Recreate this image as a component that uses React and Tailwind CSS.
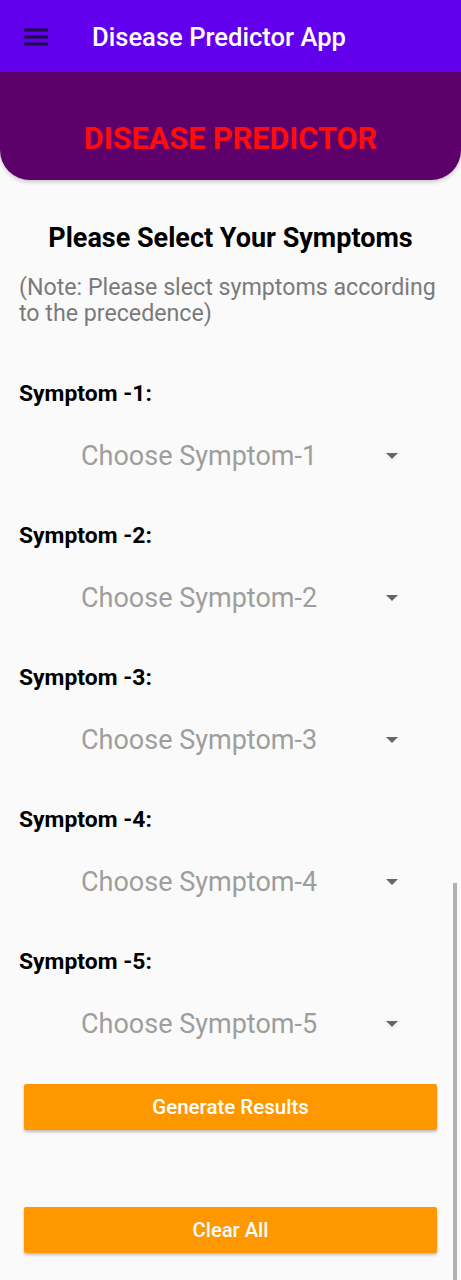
import React from "react";

function Dropdown({ n }) {
  return (
    <div className="mt-[24px] h-[48px] flex items-center">
      <span className="ml-[81px] text-[27px] leading-none text-[#9e9e9e]">Choose Symptom-{n}</span>
      <svg className="ml-auto mr-[63px]" width="12" height="6" viewBox="0 0 12 6">
        <path d="M0 0 L12 0 L6 6 Z" fill="#666666" />
      </svg>
    </div>
  );
}

export default function App() {
  const font = { fontFamily: "Roboto, 'Noto Sans', sans-serif" };
  return (
    <div className="relative w-[461px] h-[1280px] bg-[#fafafa] overflow-hidden" style={font}>
      <header className="h-[72px] bg-[#6200ee] flex items-center pl-[24px]">
        <svg width="24" height="18" viewBox="0 0 24 18" className="mt-[2px]">
          <rect x="0" y="0.5" width="24" height="3" fill="#1c0b45" />
          <rect x="0" y="7.5" width="24" height="3" fill="#1c0b45" />
          <rect x="0" y="14.5" width="24" height="3" fill="#1c0b45" />
        </svg>
        <h1 className="ml-[44px] mt-[4px] text-[25.6px] font-medium text-white leading-none">Disease Predictor App</h1>
      </header>
      <div className="h-[108px] bg-[#5e006b] rounded-b-[30px] flex items-center justify-center shadow-[0_2px_4px_rgba(0,0,0,0.2)]">
        <span className="text-[30.6px] font-bold text-[#ff0d0d] leading-none mt-[26px]">DISEASE PREDICTOR</span>
      </div>
      <h2 className="mt-[42px] text-center text-[27px] leading-[32px] font-bold text-black">Please Select Your Symptoms</h2>
      <p className="mt-[20px] px-[19px] text-[23.2px] leading-[26px] text-[#7a7a7a]">
        (Note: Please slect symptoms according to the precedence)
      </p>
      <div className="mt-[54px]">
        {[1, 2, 3, 4, 5].map((n) => (
          <div key={n} className={n === 1 ? "" : "mt-[42px]"}>
            <div className="h-[28px] flex items-center pl-[19px] text-[22.9px] font-bold text-black">Symptom -{n}:</div>
            <Dropdown n={n} />
          </div>
        ))}
      </div>
      <div className="px-[24px]">
        <button className="mt-[36px] w-full h-[46px] bg-[#ff9800] rounded-[2px] shadow-[0_2px_3px_rgba(0,0,0,0.25)] text-white text-[20.5px] font-medium">
          Generate Results
        </button>
        <button className="mt-[77px] w-full h-[46px] bg-[#ff9800] rounded-[2px] shadow-[0_2px_3px_rgba(0,0,0,0.25)] text-white text-[20.2px] font-medium">
          Clear All
        </button>
      </div>
      <div className="absolute right-[4px] top-[883px] w-[4px] h-[397px] bg-[#b0b0b0]" />
    </div>
  );
}
